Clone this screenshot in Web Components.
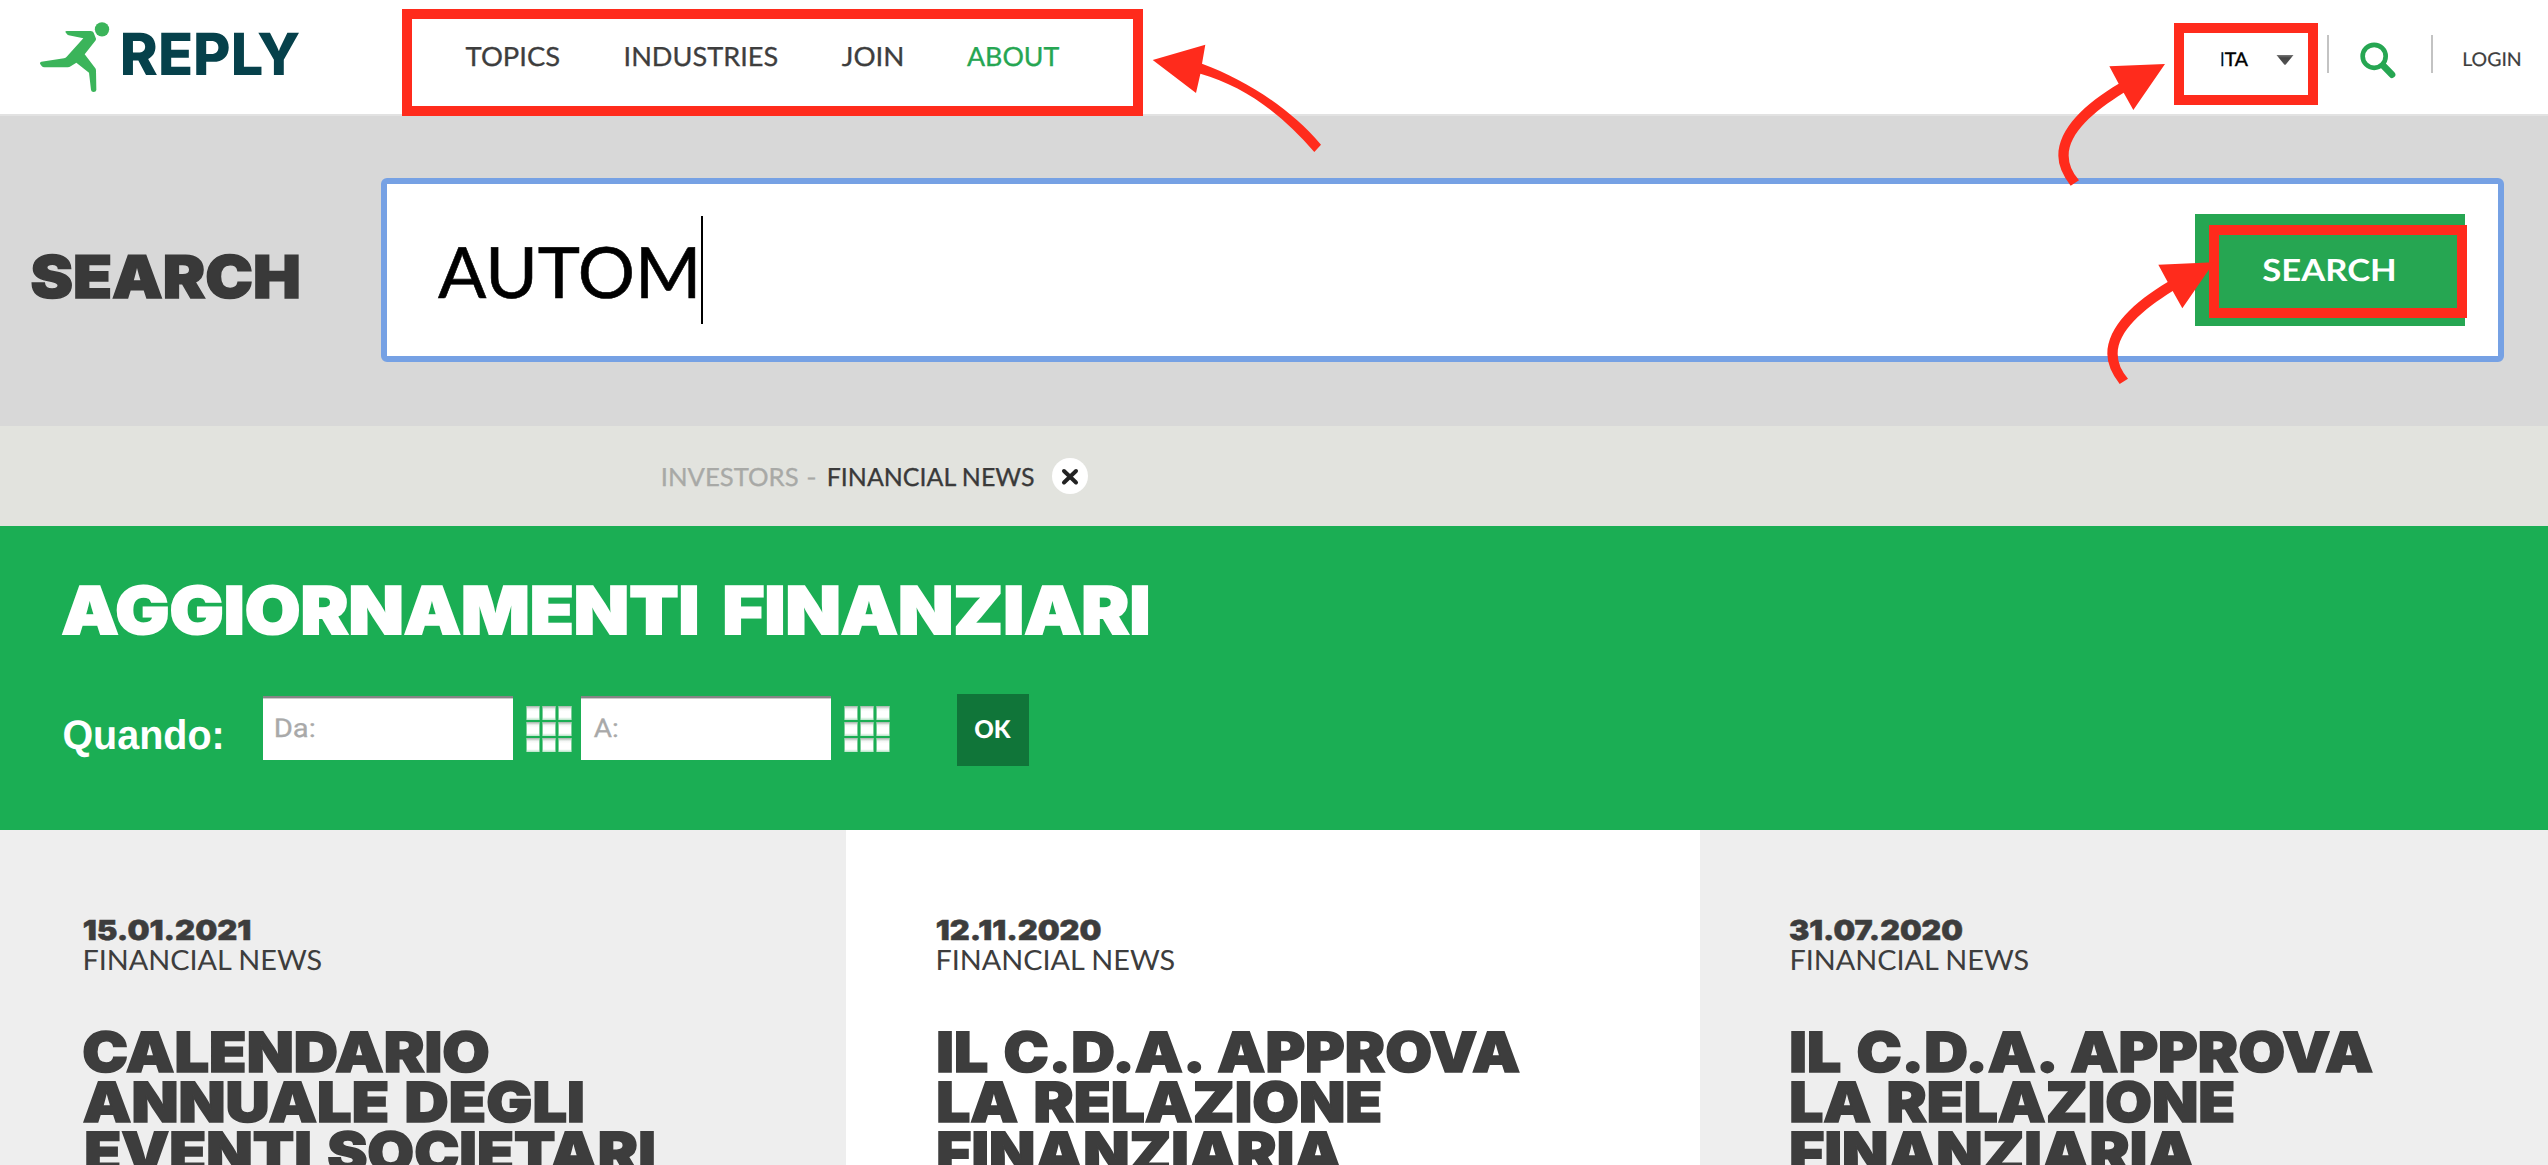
<!DOCTYPE html>
<html lang="it">
<head>
<meta charset="utf-8">
<title>Reply - Financial News</title>
<style>
html,body{margin:0;padding:0}
body{width:2548px;height:1165px;overflow:hidden;background:#fff;font-family:Lato,"Liberation Sans",sans-serif;color:#3e3e3e;text-rendering:geometricPrecision}
</style>
</head>
<body>
<reply-page></reply-page>
<script>
function define(name, html, ready){
  const tpl=document.createElement('template');
  tpl.innerHTML=html;
  customElements.define(name, class extends HTMLElement{
    connectedCallback(){
      if(this.shadowRoot) return;
      this.attachShadow({mode:'open'}).appendChild(tpl.content.cloneNode(true));
      if(ready) ready.call(this,this.shadowRoot);
    }
  });
}

/* One line of type: its box is the ink of the text, "w" wide and "cap" (cap height) tall. */
const ctx=document.createElement('canvas').getContext('2d');
define('type-line',`<style>
:host{display:block;flex:none;white-space:nowrap}
span{display:inline-block;transform-origin:0 0;vertical-align:top}
</style><span><slot></slot></span>`,function(root){
  const w=+this.getAttribute('w'),cap=+this.getAttribute('cap');
  const cs=getComputedStyle(this),span=root.querySelector('span');
  ctx.font=cs.fontWeight+' 200px '+cs.fontFamily;
  const k=cap/ctx.measureText('H').actualBoundingBoxAscent,size=k*200;
  const m=ctx.measureText(this.textContent);
  span.style.cssText=`font-size:${size}px;line-height:${cap}px`;
  const left=-m.actualBoundingBoxLeft*k;
  const bearings=(m.width-m.actualBoundingBoxLeft-m.actualBoundingBoxRight)*k;
  const ink=span.getBoundingClientRect().width-bearings;
  const s=w/ink,asc=m.fontBoundingBoxAscent*k,desc=m.fontBoundingBoxDescent*k;
  const baseline=cap/2+(asc-desc)/2;
  this.style.width=w+'px';
  this.style.height=cap+'px';
  span.style.transform=`translate(${-left*s}px,${cap-baseline}px) scaleX(${s})`;
});

define('reply-logo',`<style>
:host{display:flex;width:260px;height:114px;padding-left:39px;box-sizing:content-box;color:#06414b;font-family:Inter,sans-serif;font-weight:800}
svg{display:block;flex:none;width:83.7px;height:114px}
type-line{margin-top:33.4px}
</style>
<svg viewBox="117 0 251 342"><g fill="#3bb45a"><circle cx="306" cy="88" r="21.5"/>
<path d="M200 93H272Q279 93 281 98L288 116Q288 120 286 122L254 163L286 205Q288 208 288 212L289 270Q288 276 281 276Q274 276 273 270L267 218L229 188L212 199Q208 202 203 202H133Q128 202 125 198L120 191Q119 186 124 185L192 175Q197 174 200 170L250 115L206 106Q202 105 200 101L196 96Q196 93 200 93Z"/></g></svg>
<type-line w="176" cap="42.3">REPLY</type-line>`);

define('main-nav',`<style>
:host{display:flex;box-sizing:border-box;width:741px;height:107px;margin-top:9px;border:10px solid #ff2b1c;padding:28.500px 0 0 54px;position:relative;z-index:2;-webkit-text-stroke:.3px}
.a{margin-left:66.500px}.b{margin-left:65px}.c{margin-left:65px;color:#26a652}
</style>
<type-line w="93" cap="19">TOPICS</type-line><type-line class="a" w="151" cap="19">INDUSTRIES</type-line><type-line class="b" w="60" cap="19">JOIN</type-line><type-line class="c" w="92" cap="19">ABOUT</type-line>`);

define('language-select',`<style>
:host{display:flex;box-sizing:border-box;width:144px;height:82px;margin-top:23px;border:10px solid #ff2b1c;padding:19.500px 0 0 37.500px;color:#000;-webkit-text-stroke:.4px}
svg{display:block;margin:2px 0 0 28px}
type-line{clip-path:inset(-4px -2px -4px .5px)}
</style><type-line w="27" cap="13.6">ITA</type-line>
<svg width="18" height="11" viewBox="0 0 18 11"><defs><linearGradient id="g" x2="0" y2="1"><stop offset="0" stop-color="#777"/><stop offset=".3" stop-color="#444"/><stop offset="1" stop-color="#555"/></linearGradient></defs><path d="M.5 0H17.5L10 9.2Q9 10.4 8 9.2Z" fill="url(#g)"/></svg>`);

define('site-header',`<style>
:host{display:flex;height:114px;border-bottom:2px solid #e2e2e2;background:#fff}
main-nav{margin-left:103px}
language-select{margin-left:auto}
i{display:block;width:2px;height:38px;margin-top:35px;background:#c3c3c3;flex:none}
.one{margin-left:9px}.two{margin-left:35px}
svg{display:block;margin:40px 0 0 29px;flex:none}
.login{margin:52.500px 28.500px 0 31px;-webkit-text-stroke:.2px}
</style>
<reply-logo></reply-logo><main-nav></main-nav><language-select></language-select><i class="one"></i>
<svg width="38" height="40" viewBox="954 120 114 120"><g fill="none" stroke="#26a652"><circle cx="1002.500" cy="169" r="34.500" stroke-width="14"/><path d="M1029 196L1056 224" stroke-width="20" stroke-linecap="round"/></g></svg>
<i class="two"></i><type-line class="login" w="56" cap="13.700">LOGIN</type-line>`);

define('search-button',`<style>
:host{display:block;box-sizing:border-box;width:270px;height:112px;padding:46px 0 0 68.500px;background:#26a652;flex:none;position:relative;color:#fff;font-weight:700}
div{box-sizing:border-box;position:absolute;left:14px;top:11px;width:258px;height:93px;border:10px solid #ff2b1c}
</style><type-line w="131" cap="22">SEARCH</type-line><div></div>`);

define('search-bar',`<style>
:host{display:flex;box-sizing:border-box;height:310px;background:#d8d8d8;padding:62px 0 0 31.500px}
.label{font-family:Inter,sans-serif;font-weight:900;color:#393939;margin-top:77.500px;-webkit-text-stroke:1.500px}
.field{display:flex;box-sizing:border-box;width:2123px;height:184px;margin-left:83px;background:#fff;border:6px solid #76a1e4;border-radius:6px;padding:30px 33px 0 51.500px}
.q{color:#000;margin-top:33.500px;-webkit-text-stroke:.6px}
.caret{width:2px;height:108px;background:#000;margin:2px auto 0 6px}
</style>
<type-line class="label" w="266" cap="43">SEARCH</type-line>
<div class="field"><type-line class="q" w="257" cap="51">AUTOM</type-line><div class="caret"></div><search-button></search-button></div>`);

define('filter-crumbs',`<style>
:host{display:flex;box-sizing:border-box;height:100px;background:#e2e3de;padding:42.500px 0 0 662.500px;-webkit-text-stroke:.3px}
.p{color:#a8a9a6}.d{color:#a8a9a6;margin-left:11px}.c{margin-left:14px;color:#3a3a3a}
svg{display:block;margin:-10.500px 0 0 18px}
</style>
<type-line class="p" w="134.500" cap="18">INVESTORS</type-line><type-line class="d" w="7" cap="18">-</type-line><type-line class="c" w="204.500" cap="18">FINANCIAL NEWS</type-line>
<svg width="36" height="36" viewBox="0 0 36 36"><circle cx="18" cy="18" r="18" fill="#fff"/><path d="M12 13L24 24.500M24 13L12 24.500" stroke="#222" stroke-width="4" stroke-linecap="round"/></svg>`);

define('date-field',`<style>
:host{display:flex}
div{box-sizing:border-box;width:250px;height:64px;background:#fff;border-top:2px solid #858585;box-shadow:inset 0 1px 0 #ccc;padding:22px 0 0 13px;color:#a9a9a9;font-family:Roboto,sans-serif;-webkit-text-stroke:.3px}
svg{display:block;margin:10px 0 0 13px}
</style><div></div>
<svg width="46" height="46" viewBox="0 0 46 46"><defs><linearGradient id="s" x2="0" y2="1"><stop offset="0" stop-color="#a3b3a9"/><stop offset=".22" stop-color="#f4f6f5"/><stop offset=".4" stop-color="#fff"/><stop offset=".8" stop-color="#fff"/><stop offset="1" stop-color="#b5e3c6"/></linearGradient></defs><g></g></svg>`,
function(root){
  const t=document.createElement('type-line');
  t.textContent=this.getAttribute('label');
  t.setAttribute('w',this.getAttribute('w'));t.setAttribute('cap','18.500');
  root.querySelector('div').append(t);
  let r='';
  for(let y=0;y<3;y++)for(let x=0;x<3;x++)r+=`<rect x="${x*16}" y="${y*16}" width="14" height="14" fill="#a9dcbb" opacity=".7"/><rect x="${x*16+1}" y="${y*16}" width="12" height="14" fill="url(#s)"/>`;
  root.querySelector('g').innerHTML=r;
});

define('finance-banner',`<style>
:host{display:block;box-sizing:border-box;height:304px;background:#1bae54;color:#fff;padding:60px 0 0 63px}
.h{font-family:Inter,sans-serif;font-weight:900;word-spacing:8px;-webkit-text-stroke:1.800px}
.row{display:flex;margin-top:60px}
.q{font-family:"Liberation Sans",sans-serif;font-weight:700;margin:26.500px 42px 0 1px}
date-field{margin-top:2px}
.s{margin-left:9px}
.ok{width:54px;height:45.500px;padding:26.500px 0 0 18px;background:#107539;margin-left:67px;font-weight:900}
</style>
<type-line class="h" w="1084" cap="48">AGGIORNAMENTI FINANZIARI</type-line>
<div class="row"><type-line class="q" w="157" cap="28.700">Quando:</type-line>
<date-field label="Da:" w="38"></date-field><date-field class="s" label="A:" w="23"></date-field>
<div class="ok"><type-line w="36" cap="18">OK</type-line></div></div>`);

define('news-card',`<style>
:host{display:block;box-sizing:border-box;height:335px;padding-top:90px;overflow:hidden;color:#3d3d3d}
</style><slot></slot>`);

define('news-grid',`<style>
:host{display:grid;grid-template-columns:846px 854px 848px}
.g{background:#eee}
.d{font-family:Inter,sans-serif;font-weight:900;-webkit-text-stroke:.5px}
.f{margin:10.500px 0 62px 1.500px}
.t{font-family:Inter,sans-serif;font-weight:900;margin-bottom:9.500px;word-spacing:3px;-webkit-text-stroke:1.500px}
.x{margin-left:2px}
</style>
<news-card class="g" style="padding-left:83.500px"><type-line class="d" w="166" cap="20">15.01.2021</type-line><type-line class="f" w="236" cap="20">FINANCIAL NEWS</type-line>
<type-line class="t" w="404" cap="40.500">CALENDARIO</type-line><type-line class="t" w="498" cap="40.500">ANNUALE DEGLI</type-line><type-line class="t" style="margin-left:3px" w="566" cap="40.500">EVENTI SOCIETARI</type-line></news-card>
<news-card style="padding-left:90.500px"><type-line class="d" w="163.500" cap="20">12.11.2020</type-line><type-line class="f" w="236" cap="20">FINANCIAL NEWS</type-line>
<type-line class="t x" w="580" cap="40.500">IL C.D.A. APPROVA</type-line><type-line class="t x" w="441" cap="40.500">LA RELAZIONE</type-line><type-line class="t x" w="402" cap="40.500">FINANZIARIA</type-line></news-card>
<news-card class="g" style="padding-left:90px"><type-line class="d" w="172" cap="20">31.07.2020</type-line><type-line class="f" w="236" cap="20">FINANCIAL NEWS</type-line>
<type-line class="t x" w="580" cap="40.500">IL C.D.A. APPROVA</type-line><type-line class="t x" w="441" cap="40.500">LA RELAZIONE</type-line><type-line class="t x" w="402" cap="40.500">FINANZIARIA</type-line></news-card>`);

/* Annotation arrows float over the page. */
define('callout-arrows',`<style>
:host{position:absolute;left:0;top:0;z-index:5;pointer-events:none}
svg{display:block}
</style><svg width="2548" height="420" viewBox="0 0 2548 420"><defs><path id="a" d="M375 192L208 199L236 251C136 311 55 385 55 467Q55 509 92 557L117 541Q86 505 86 467C86 399 161 334 251 278L280 330Z"/></defs><g fill="#ff2b1c">
<path d="M1152.700 60L1205.300 44.700L1202 63.700C1246 80 1290 108 1321 144.700L1314.300 152C1280 112 1243 86 1200.400 73.700L1196 93Z"/>
<use href="#a" transform="translate(2040 0) scale(.33333)"/>
<use href="#a" transform="translate(2089 198.330) scale(.33333)"/>
</g></svg>`);

define('reply-page',`<style>:host{display:block;position:relative;width:2548px;height:1165px;overflow:hidden}</style>
<site-header></site-header><search-bar></search-bar><filter-crumbs></filter-crumbs><finance-banner></finance-banner><news-grid></news-grid><callout-arrows></callout-arrows>`);
</script>
</body>
</html>
